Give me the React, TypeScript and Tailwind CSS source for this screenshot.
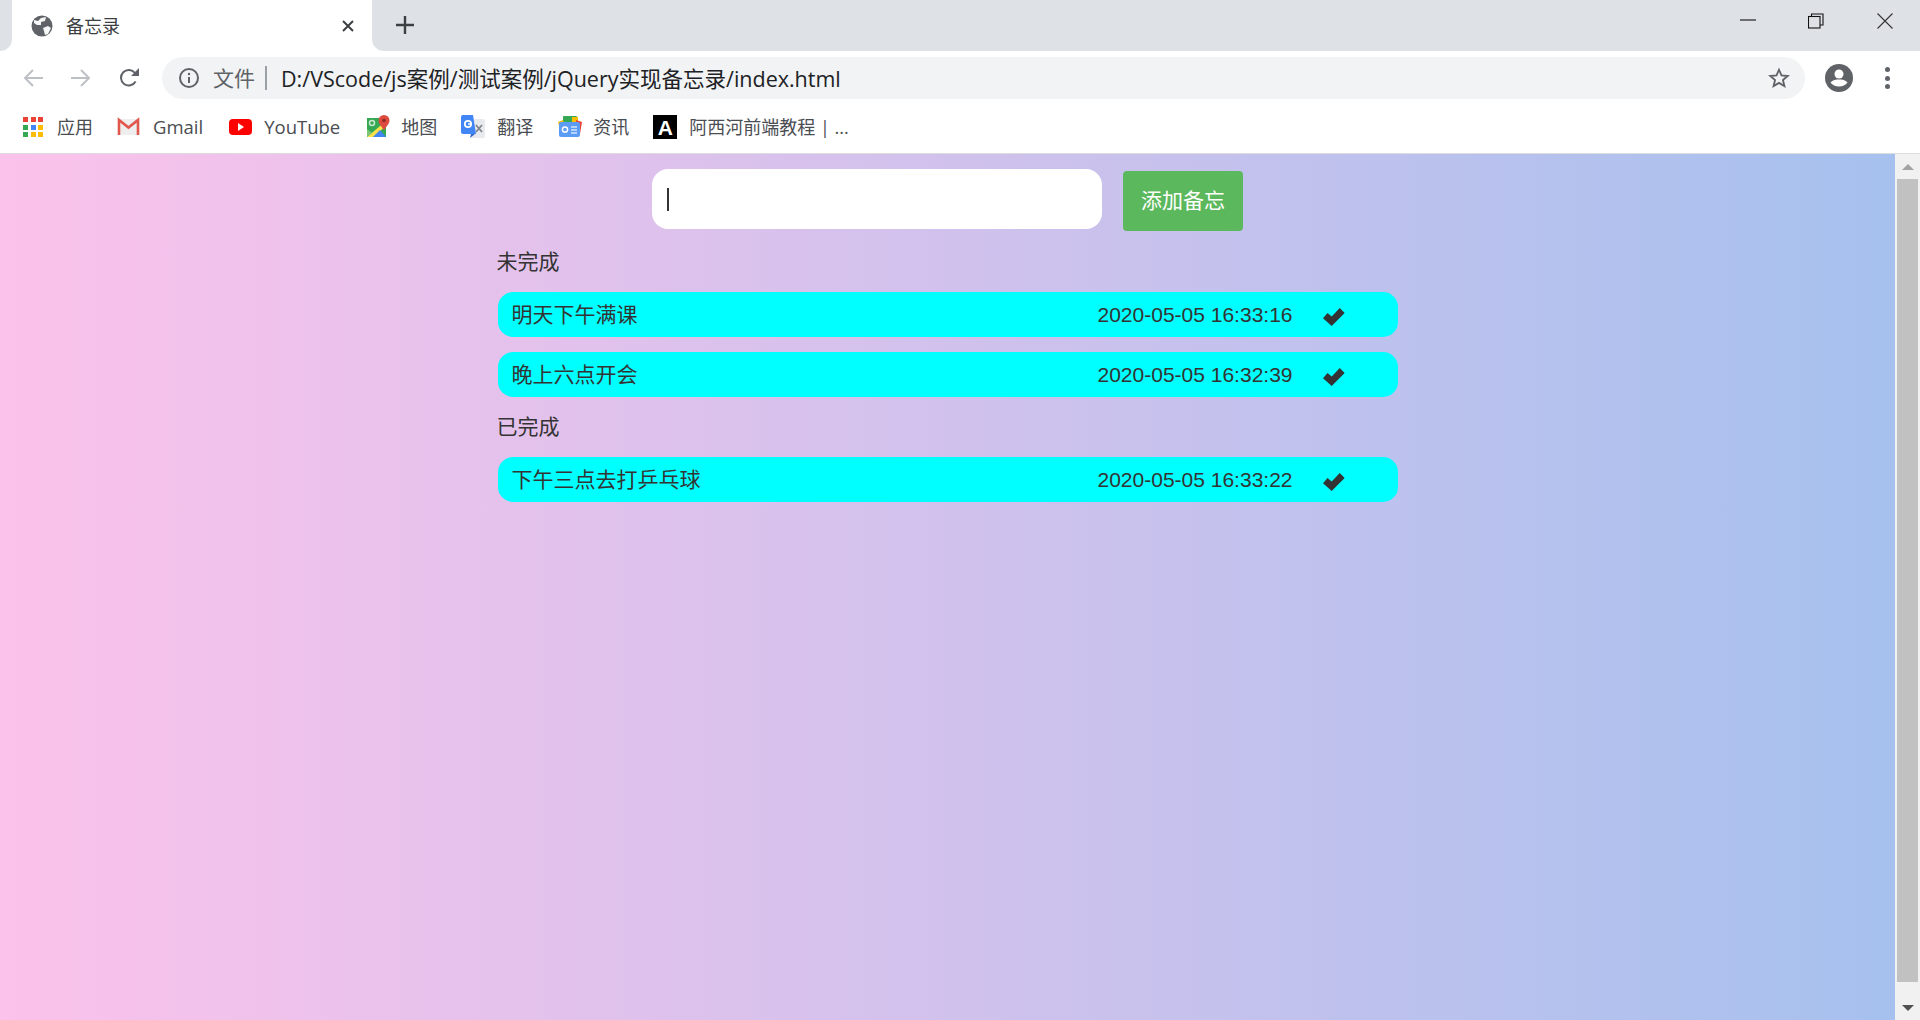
import React from "react";

const chromeFont = "font-['Open_Sans','Noto_Sans_CJK_SC',sans-serif]";
const pageFont = "font-['Liberation_Sans','Noto_Sans_CJK_SC',sans-serif]";

const AppsIcon = () => {
  const colors = ["#ea4335", "#ea4335", "#ea4335", "#34a853", "#4285f4", "#fbbc05", "#34a853", "#fbbc05", "#fbbc05"];
  return (
    <div className="grid grid-cols-3 gap-[2.5px] w-[20px] h-[20px]">
      {colors.map((c, i) => (
        <div key={i} className="w-[5px] h-[5px]" style={{ background: c }} />
      ))}
    </div>
  );
};

const GmailIcon = () => (
  <svg width="23" height="20" viewBox="0 0 23 20">
    <rect x="1" y="2" width="21" height="16" fill="#eeeeee" />
    <path d="M2 18V3l9.500 7.500L21 3v15" fill="none" stroke="#e2574c" strokeWidth="2.600" />
  </svg>
);

const YoutubeIcon = () => (
  <svg width="23" height="18" viewBox="0 0 23 18">
    <rect x="0" y="1" width="23" height="16" rx="4" fill="#ff0000" />
    <path d="M9 5l6 4-6 4z" fill="#fff" />
  </svg>
);

const MapsIcon = () => (
  <svg width="23" height="24" viewBox="0 0 23 24">
    <rect x="0" y="3" width="19" height="19" fill="#34a853" />
    <path d="M0 22L19 6v5L6 22z" fill="#fbe14b" />
    <path d="M6 22l7-7 6 7z" fill="#4285f4" />
    <path d="M0 22V14l5 4z" fill="#7cc576" />
    <circle cx="5" cy="8" r="2.500" fill="none" stroke="#c9e8cf" strokeWidth="1.500" />
    <path d="M17 0a5.500 5.500 0 0 1 5.500 5.500c0 3.500-3.500 6-5.500 10-2-4-5.500-6.500-5.500-10A5.500 5.500 0 0 1 17 0z" fill="#dd4b3e" />
    <circle cx="17" cy="5.500" r="1.800" fill="#8e2a22" />
  </svg>
);

const TranslateIcon = () => (
  <svg width="24" height="24" viewBox="0 0 24 24">
    <rect x="10" y="4" width="14" height="19" rx="2" fill="#e8eaed" />
    <path d="M15 10l6 7M21 10l-6 7" stroke="#80868b" strokeWidth="1.800" />
    <path d="M2 0h10l3 19H2a2 2 0 0 1-2-2V2a2 2 0 0 1 2-2z" fill="#4285f4" />
    <path d="M10 19l-1 4 5-4z" fill="#3367c9" />
    <circle cx="7" cy="9" r="3.200" fill="none" stroke="#fff" strokeWidth="1.700" />
    <path d="M7 9h4" stroke="#fff" strokeWidth="1.500" />
  </svg>
);

const NewsIcon = () => (
  <svg width="24" height="22" viewBox="0 0 24 22">
    <rect x="5" y="0" width="14" height="10" rx="1" fill="#34a853" />
    <rect x="14" y="1" width="6" height="9" fill="#fbbc05" />
    <path d="M18 4l6 2-2 12-4-1z" fill="#ea4335" />
    <path d="M0 6l5-2 2 6-5 4z" fill="#fbbc05" />
    <rect x="1" y="6" width="21" height="15" rx="2" fill="#5c9cf5" />
    <circle cx="7" cy="13.500" r="2.600" fill="none" stroke="#fff" strokeWidth="1.500" />
    <path d="M13 11h6M13 14h6M13 17h6" stroke="#d2e3fc" strokeWidth="1.500" />
  </svg>
);

const ASquare = () => (
  <div className="w-[24px] h-[24px] bg-black flex items-center justify-center">
    <span className="text-white text-[21px] leading-none font-bold font-['Liberation_Sans',sans-serif]">A</span>
  </div>
);

const bookmarks: { icon: React.ReactNode; label: string; iconClass: string; gap: string; size: string }[] = [
  { icon: <AppsIcon />, label: "应用", iconClass: "w-[20px] mr-[14px]", gap: "mr-[24px]", size: "text-[18px]" },
  { icon: <GmailIcon />, label: "Gmail", iconClass: "w-[23px] mr-[13px]", gap: "mr-[26px]", size: "text-[18.500px]" },
  { icon: <YoutubeIcon />, label: "YouTube", iconClass: "w-[23px] mr-[12px]", gap: "mr-[27px]", size: "text-[18.500px]" },
  { icon: <MapsIcon />, label: "地图", iconClass: "w-[23px] mr-[11px]", gap: "mr-[24px]", size: "text-[18px]" },
  { icon: <TranslateIcon />, label: "翻译", iconClass: "w-[24px] mr-[12px]", gap: "mr-[25px]", size: "text-[18px]" },
  { icon: <NewsIcon />, label: "资讯", iconClass: "w-[24px] mr-[11px]", gap: "mr-[24px]", size: "text-[18px]" },
  { icon: <ASquare />, label: "阿西河前端教程 | ...", iconClass: "w-[24px] mr-[12px]", gap: "", size: "text-[18px]" },
];

function TabStrip() {
  return (
    <div className="flex h-[51px] bg-white">
      <div className="w-[12px] bg-[#dee1e6] rounded-br-[12px]" />
      <div className="w-[360px] rounded-t-[12px] bg-white flex items-center pl-[19px]">
        <svg width="22" height="22" viewBox="0 0 22 22" className="mr-[13px]">
          <circle cx="11" cy="11" r="10.500" fill="#5f6368" />
          <path d="M3 5l4 1 3-3 5-1-1 4-4 1v3l-4 0-3-2z" fill="#fff" opacity="0.950" />
          <path d="M12 13l5-2 3 2-3 6-3 1-1-4z" fill="#fff" opacity="0.950" />
        </svg>
        <span className="text-[18px] text-[#3c4043] leading-none">备忘录</span>
        <svg width="14" height="14" viewBox="0 0 14 14" className="ml-[221px]">
          <path d="M2 2l10 10M12 2L2 12" stroke="#3c4043" strokeWidth="2" />
        </svg>
      </div>
      <div className="flex-1 bg-[#dee1e6] rounded-bl-[12px] flex items-start pl-[24px]">
        <svg width="18" height="18" viewBox="0 0 18 18" className="mt-[16px]">
          <path d="M9 0v18M0 9h18" stroke="#3c4043" strokeWidth="2.400" />
        </svg>
        <div className="flex-1" />
        <svg width="16" height="2" viewBox="0 0 16 2" className="mt-[19px] mr-[52px]">
          <path d="M0 1h16" stroke="#202124" strokeWidth="1.200" />
        </svg>
        <svg width="16" height="16" viewBox="0 0 16 16" className="mt-[13px] mr-[53px]">
          <rect x="0.500" y="3.500" width="11.500" height="11.500" fill="none" stroke="#111" strokeWidth="1.100" />
          <path d="M3.500 3.500V1h11.500v11h-3" fill="none" stroke="#111" strokeWidth="1.100" />
        </svg>
        <svg width="16" height="16" viewBox="0 0 16 16" className="mt-[13px] mr-[27px]">
          <path d="M0.500 0.500l15 15M15.500 0.500l-15 15" stroke="#333" strokeWidth="1.100" />
        </svg>
      </div>
    </div>
  );
}

function Toolbar() {
  return (
    <div className="flex items-center h-[54px] bg-white pl-[23px] pr-[30px]">
      <svg width="20" height="20" viewBox="0 0 20 20" className="mr-[28px]">
        <path d="M20 10H2M10 2l-8 8 8 8" fill="none" stroke="#bdc1c6" strokeWidth="2" />
      </svg>
      <svg width="20" height="20" viewBox="0 0 20 20" className="mr-[28px]">
        <path d="M0 10h18M10 2l8 8-8 8" fill="none" stroke="#bdc1c6" strokeWidth="2" />
      </svg>
      <svg width="20" height="20" viewBox="0 0 20 20" className="mr-[23px]">
        <path d="M16.600 13.500A7.800 7.800 0 1 1 16 5" fill="none" stroke="#5f6368" strokeWidth="2" />
        <path d="M20 0v8h-8z" fill="#5f6368" />
      </svg>
      <div className="flex-1 h-[42px] rounded-full bg-[#f1f3f4] flex items-center pl-[17px] pr-[15px]">
        <svg width="20" height="20" viewBox="0 0 20 20" className="mr-[14px]">
          <circle cx="10" cy="10" r="9" fill="none" stroke="#5f6368" strokeWidth="2" />
          <path d="M10 9v6" stroke="#5f6368" strokeWidth="2" />
          <circle cx="10" cy="6" r="1.200" fill="#5f6368" />
        </svg>
        <span className="text-[21px] text-[#5f6368] leading-none">文件</span>
        <div className="w-[2px] h-[24px] bg-[#9aa0a6] ml-[10px] mr-[14px]" />
        <span className="text-[21.500px] text-[#202124] leading-none mt-[1px]">D:/VScode/js案例/测试案例/jQuery实现备忘录/index.html</span>
        <div className="flex-1" />
        <svg width="22" height="22" viewBox="0 0 24 24">
          <path d="M12 3l2.700 6.200 6.800.6-5.200 4.400 1.600 6.600L12 17.300l-5.900 3.500 1.600-6.600-5.200-4.400 6.800-.6z" fill="none" stroke="#5f6368" strokeWidth="2" />
        </svg>
      </div>
      <svg width="28" height="28" viewBox="0 0 28 28" className="ml-[20px] mr-[32px]">
        <circle cx="14" cy="14" r="14" fill="#5f6368" />
        <circle cx="14" cy="10" r="4.500" fill="#fff" />
        <path d="M5.500 18.500c2-2.500 5.500-3 8.500-3s6.500.5 8.500 3c-2 2.500-5 4-8.500 4s-6.500-1.500-8.500-4z" fill="#fff" />
      </svg>
      <div className="flex flex-col gap-[3.500px] w-[5px]">
        <div className="w-[5px] h-[5px] rounded-full bg-[#5f6368]" />
        <div className="w-[5px] h-[5px] rounded-full bg-[#5f6368]" />
        <div className="w-[5px] h-[5px] rounded-full bg-[#5f6368]" />
      </div>
    </div>
  );
}

function BookmarkBar() {
  return (
    <div className="flex items-center h-[49px] pb-[4px] pl-[23px] bg-white border-b border-[#dcdcdc]">
      {bookmarks.map((b) => (
        <div key={b.label} className={`flex items-center ${b.gap}`}>
          <div className={`${b.iconClass} flex justify-center`}>{b.icon}</div>
          <span className={`${b.size} leading-none text-[#4a4d52] whitespace-nowrap`}>{b.label}</span>
        </div>
      ))}
    </div>
  );
}

function TodoRow({ title, time }: { title: string; time: string }) {
  return (
    <div className="flex items-center h-[45px] rounded-[15px] bg-[#00ffff] pl-[14px] text-[21px] text-[#333333]">
      <div className="w-[586px]">{title}</div>
      <div className="w-[225px]">{time}</div>
      <svg width="22" height="19" viewBox="0 0 21 18" className="mt-[5px]">
        <path d="M0 9.700L8.300 17 20.700 4.700 16 0 8.300 8 4.300 4.700z" fill="#333333" />
      </svg>
    </div>
  );
}

function Scrollbar() {
  return (
    <div className="w-[25px] bg-[#f1f1f1] flex flex-col items-center">
      <div className="h-[25px] flex items-center justify-center">
        <div className="w-0 h-0 border-x-[6px] border-x-transparent border-b-[6px] border-b-[#a3a3a3]" />
      </div>
      <div className="flex-1 w-[21px] bg-[#c1c1c1]" />
      <div className="h-[38px] flex items-start justify-center pt-[23px]">
        <div className="w-0 h-0 border-x-[6px] border-x-transparent border-t-[6px] border-t-[#505050]" />
      </div>
    </div>
  );
}

export default function App() {
  return (
    <div className={`h-screen w-full overflow-hidden flex flex-col ${chromeFont}`}>
      <TabStrip />
      <Toolbar />
      <BookmarkBar />
      <div className="flex-1 flex min-h-0">
        <main className={`flex-1 bg-linear-to-r/srgb from-[#fbc2eb] to-[#a6c1ee] pt-[15px] ${pageFont}`}>
          <div className="flex justify-center">
            <div className="w-[450px] h-[60px] rounded-[16px] bg-white flex items-center pl-[15px]">
              <div className="w-[2px] h-[23px] bg-[#333333]" />
            </div>
            <button className="ml-[21px] mt-[2px] w-[120px] h-[60px] rounded-[4px] bg-[#5cb85c] text-white text-[21px]">
              添加备忘
            </button>
          </div>
          <div className="w-[900px] mx-auto mt-[16px] flex flex-col gap-[15px] text-[#333333]">
            <div className="text-[21px] leading-[29px] mb-px -ml-px">未完成</div>
            <TodoRow title="明天下午满课" time="2020-05-05 16:33:16" />
            <TodoRow title="晚上六点开会" time="2020-05-05 16:32:39" />
            <div className="text-[21px] leading-[29px] mb-px -ml-px">已完成</div>
            <TodoRow title="下午三点去打乒乓球" time="2020-05-05 16:33:22" />
          </div>
        </main>
        <Scrollbar />
      </div>
    </div>
  );
}
